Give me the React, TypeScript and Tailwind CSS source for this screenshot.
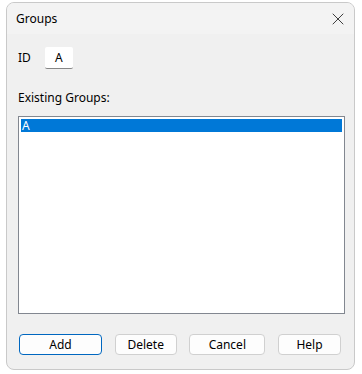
import { X } from "lucide-react"

const buttons = [
  { label: "Add", w: "w-[83px]", primary: true },
  { label: "Delete", w: "w-[62px]" },
  { label: "Cancel", w: "w-[76px]" },
  { label: "Help", w: "w-[63px]" },
]

export default function App() {
  return (
    <div className="h-[374px] w-[362px] bg-white pl-[6px] pt-[2px] font-['Noto_Sans',sans-serif] text-[12px] text-black">
      <div className="flex h-[368px] w-[349px] flex-col overflow-hidden rounded-[8px] border border-[#c9c9c9] bg-[#f0f0f0]">
        {/* title bar */}
        <div className="flex h-[31px] shrink-0 items-center justify-between bg-[#f3f3f3] pl-[9px] pr-[6px]">
          <span className="text-[12px]">Groups</span>
          <X className="h-[20px] w-[20px] text-[#1a1a1a]" strokeWidth={1} />
        </div>

        <div className="flex flex-1 flex-col px-[11px]">
          <div className="mt-[13px] flex items-center gap-[14px]">
            <span>ID</span>
            <div className="flex h-[22px] w-[28px] items-center justify-center rounded-[2px] border-b border-[#868686] bg-white">
              A
            </div>
          </div>

          <div className="mt-[20px]">Existing Groups:</div>

          <div className="mt-[9px] h-[198px] w-[327px] border border-[#828790] bg-white p-[2px]">
            <div className="flex h-[13px] items-center bg-[#0078d7] pl-[1px] leading-none text-white">A</div>
          </div>

          <div className="mt-[20px] flex items-center justify-between pl-[1px] pr-[2px]">
            {buttons.map((b) => (
              <button
                key={b.label}
                className={`h-[21px] ${b.w} rounded-[4px] bg-[#fdfdfd] text-[12px] leading-none ${
                  b.primary ? "border border-[#0067c0]" : "border border-[#d0d0d0]"
                }`}
              >
                {b.label}
              </button>
            ))}
          </div>
        </div>
      </div>
    </div>
  )
}
